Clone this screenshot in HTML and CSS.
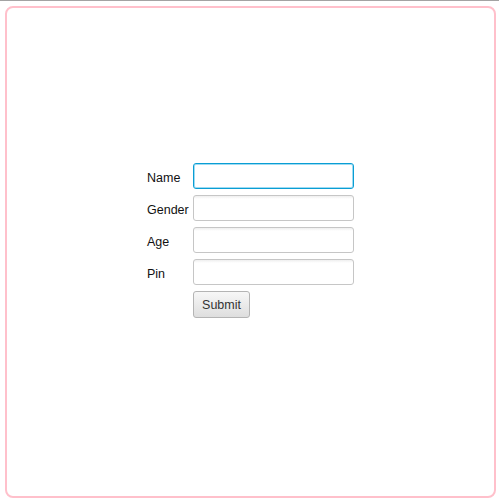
FILE: index.html
```html
<!DOCTYPE html>
<html>
<head>
<meta charset="utf-8">
<link rel="stylesheet" href="styles.css">
</head>
<body>
<div class="frame">
  <form class="form">
    <label class="label" for="name">Name</label>
    <input class="field is-focused" id="name" type="text">
    <label class="label" for="gender">Gender</label>
    <input class="field" id="gender" type="text">
    <label class="label" for="age">Age</label>
    <input class="field" id="age" type="text">
    <label class="label" for="pin">Pin</label>
    <input class="field" id="pin" type="text">
    <span class="spacer"></span>
    <div class="actions"><button class="btn" type="button">Submit</button></div>
  </form>
</div>
</body>
</html>
```
FILE: styles.css
```css
html, body {
  margin: 0;
  padding: 0;
  background: #ffffff;
}
body {
  border-top: 1px solid #a3a3a3;
  padding: 5px 3px 3px 5px;
  font-family: "Liberation Sans", Arial, sans-serif;
  font-size: 12.5px;
  color: #1a1a1a;
}
.frame {
  box-sizing: border-box;
  width: 491px;
  height: 492px;
  border: 2px solid #ffc0cb;
  border-radius: 8px;
  display: flex;
  justify-content: center;
  align-items: flex-start;
  padding-top: 155px;
}
.form {
  display: grid;
  grid-template-columns: 41px 161px;
  grid-auto-rows: 26px;
  column-gap: 5px;
  row-gap: 6px;
  margin: 0;
}
.label {
  display: flex;
  align-items: center;
  padding-top: 3px;
  white-space: nowrap;
  color: #111;
}
.field {
  box-sizing: border-box;
  width: 161px;
  height: 26px;
  margin: 0;
  border: 1px solid #c6c6c6;
  border-radius: 3px;
  background: linear-gradient(#efefef 0, #ffffff 3px);
  font: inherit;
  outline: none;
  padding: 0 6px;
}
.field.is-focused {
  border: 1px solid #0a9ed4;
  box-shadow: inset 0 0 0 1px #9fdbf2;
  background: #ffffff;
}
.actions {
  height: 27px;
}
.btn {
  box-sizing: border-box;
  width: 57px;
  height: 27px;
  margin: 0;
  padding: 0;
  border: 1px solid #b4b4b4;
  border-radius: 3px;
  background: linear-gradient(#f7f7f7, #dedede);
  font-family: "Liberation Sans", Arial, sans-serif;
  font-size: 12.5px;
  color: #333333;
}
```
